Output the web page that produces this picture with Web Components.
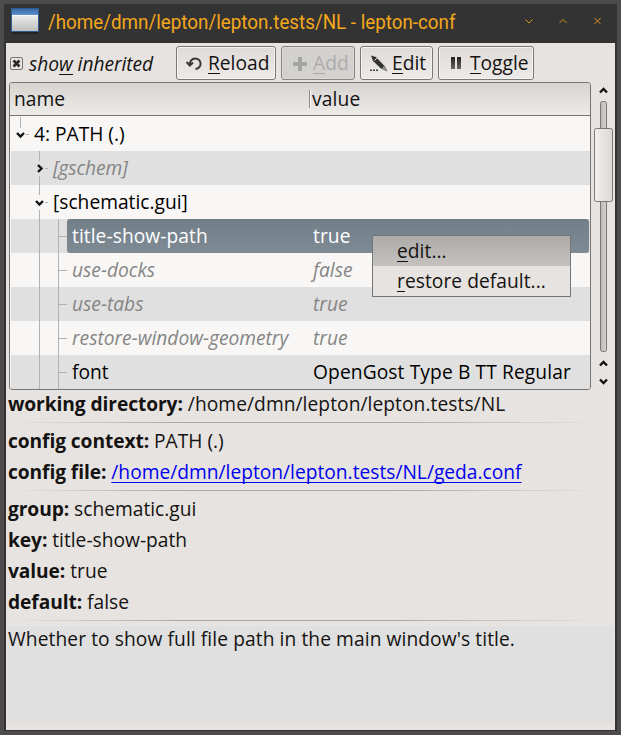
<!DOCTYPE html>
<html lang="en"><head><meta charset="utf-8"><title>lepton-conf</title>
<style>
html,body{margin:0;height:735px;overflow:hidden}
body{font:19.2px/31px "Open Sans","Noto Sans",sans-serif;color:#141312}
</style></head><body>
<conf-window></conf-window>
<script>
const define=(name,html,setup)=>customElements.define(name,class extends HTMLElement{
  connectedCallback(){
    if(this.shadowRoot)return;
    const t=document.createElement('template');
    t.innerHTML='<style>*{box-sizing:border-box}u{text-decoration:none;background:linear-gradient(currentColor,currentColor) 0 calc(100% - 2px)/100% 1px no-repeat}</style>'+html;
    this.attachShadow({mode:'open'}).append(t.content.cloneNode(true));
    if(setup)setup(this,this.shadowRoot);
  }
});

define('title-bar',`<style>
:host{display:flex;height:39px;background:#333;color:#f5a81c;align-items:center;padding:0 12px 0 7px;box-sizing:border-box}
.t{font:20px/38px Roboto,sans-serif;width:408px;margin-left:9px;white-space:nowrap;position:relative;top:-2px}
.t span{display:inline-block;transform-origin:0 50%}
.w{margin-left:auto;margin-top:-5px;margin-right:2px}
</style>
<svg width="28" height="27" viewBox="0 0 28 27" style="margin-top:-7px"><defs><linearGradient id="a" x2="0" y2="1"><stop stop-color="#3b6aa6"/><stop offset="1" stop-color="#5f92cf"/></linearGradient><linearGradient id="b" x2="0" y2="1"><stop stop-color="#eee"/><stop offset="1" stop-color="#bebebe"/></linearGradient></defs><path d="M1 26h26" stroke="#222" stroke-width="2"/><path d="M0 1h28v24H0z" fill="#2f5b93"/><path d="M1 2h26v6H1z" fill="url(#a)"/><path d="M1 8h26v16H1z" fill="url(#b)"/><path d="M1 8.500h26" stroke="#f8f8f8"/></svg>
<div class="t"><span><slot></slot></span></div>
<svg class="w" width="80" height="14" viewBox="0 0 80 14" fill="none" stroke="#dc9320"><path d="M2.500 5.500l3.500 3.500 3.500-3.500M36.500 9l3.500-3.500 3.500 3.500M71.500 4l6 6m0-6l-6 6"/></svg>`,
(el,r)=>{const s=r.querySelector('.t span');const w=s.getBoundingClientRect().width;if(w)s.style.transform='scaleX('+407.5/w+')'});

const icons={
reload:'<path d="M4 10a5.300 5.300 0 1 1 5.500 5" fill="none" stroke="#3a3a3a" stroke-width="2"/><path d="M.5 8l3.300 3.500L7 8.500" fill="none" stroke="#3a3a3a" stroke-width="2"/>',
add:'<path d="M7 3h4v5h5v4h-5v5H7v-5H2V8h5z" fill="#a3a3a1"/>',
edit:'<path d="M1 1.500l5 1.500 8.500 9-3 3L3 7z" fill="#333"/><path d="M14.500 12l2.500 5-5.500-2.500z" fill="#999" stroke="#555" stroke-width=".6"/><path d="M4.500 6.500l3-3" stroke="#ddd"/><path d="M0 16.300h2m1 0h2m1 0h2" stroke="#444" stroke-width="1.500"/>',
toggle:'<defs><linearGradient id="g" x2="0" y2="1"><stop stop-color="#222"/><stop offset="1" stop-color="#666"/></linearGradient></defs><path d="M3 3h4v12H3zM9 3h4v12H9z" fill="url(#g)"/>'};
define('tool-button',`<style>
:host{display:flex;box-sizing:border-box;height:34px;border:1px solid #7b7975;border-radius:3px;background:linear-gradient(#dedbd7,#edebe9);box-shadow:inset 0 0 0 1px #f5f3f1;align-items:center;white-space:nowrap;padding-left:9px}
:host([disabled]){color:#adaba9;background:#d3d1d0;border-color:#878582;box-shadow:inset 0 0 0 1px #dddbd9}
svg{flex:none;margin-right:4px}div{margin-top:-1px}
</style><svg width="18" height="18" viewBox="0 0 18 18"></svg><div><slot></slot></div>`,
(el,r)=>{r.querySelector('svg').innerHTML=icons[el.getAttribute('icon')]});

define('check-option',`<style>:host{display:flex;align-items:center;font-style:italic;width:166px;letter-spacing:-.05px}
svg{margin-right:6px;margin-top:1px}</style>
<svg width="13" height="13" viewBox="0 0 13 13"><rect x=".5" y=".5" width="12" height="12" rx="1.500" fill="#e8e5e2" stroke="#77736f"/><path d="M3.500 3.500l6 6m0-6l-6 6" stroke="#282828" stroke-width="2.600"/></svg><slot></slot>`);

define('tree-row',`<style>
:host{display:flex;height:34px;background:#f8f7f5;line-height:34px;color:#000;white-space:nowrap}
:host(:nth-of-type(even)){background:#e0e0e0}
:host([inherited]){font-style:italic;color:#858585}
svg{flex:none}.c{flex:1;display:flex;border-radius:3px;padding-left:5px;margin-right:1px}
:host([selected]) .c{background:linear-gradient(#717f88,#7f8b94);color:#fff}
.n{width:var(--n)}
</style><svg height="34"></svg><div class="c"><div class="n"><slot></slot></div><div><slot name="value"></slot></div></div>`,
(el,r)=>{const d=+el.getAttribute('depth'),s=r.querySelector('svg'),o=el.getAttribute('open');
 const w=[18,37,56][d];s.setAttribute('width',w);r.querySelector('.n').style.setProperty('--n',(297-w)+'px');
 const down='<path d="M-3.500-1.500L0 2 3.500-1.500" fill="none" stroke="#111" stroke-width="2.400"/>';
 const right='<path d="M-1.500-3.500L2 0-1.500 3.500" fill="none" stroke="#111" stroke-width="2.400"/>';
 let h='';
 if(d==0)h='<path d="M9.500 0v11M15 17.500h3" stroke="#b2b2b2"/><g transform="translate(9.500 17.500)">'+down+'</g>';
 if(d==1)h='<path d="M28.500 0v10M28.500 25v9M34 17.500h3" stroke="#b2b2b2"/><g transform="translate(28.500 17.500)">'+(o?down:right)+'</g>';
 if(d==2)h='<path d="M28.500 0v34M47.500 0v34M47.500 17.500h8.500" stroke="#b2b2b2"/>';
 s.innerHTML=h});

define('config-tree',`<style>
:host{display:block;box-sizing:border-box;width:582px;height:308px;border:1px solid #777572;border-radius:3px;overflow:hidden;background:#f8f7f5;padding:0 0 0 1px;}
header{display:flex;height:33px;margin-left:-1px;border-bottom:1px solid #777572;background:linear-gradient(#d7d4d0,#edebe8);line-height:32px;padding-left:4px;margin-bottom:1px}
header div:first-child{width:295px}
header div+div{border-left:1px solid #888;box-shadow:inset 1px 0 #fafafa;padding-left:2px;height:18px;margin-top:7px;line-height:18px;letter-spacing:.15px}
</style><header><div>name</div><div>value</div></header><slot></slot>`);

define('scroll-bar',`<style>:host{display:block;width:19px;height:308px}</style>
<svg width="19" height="308" viewBox="0 0 19 308"><defs><linearGradient id="t"><stop stop-color="#bdbbb8"/><stop offset="1" stop-color="#d4d2cf"/></linearGradient><linearGradient id="h"><stop stop-color="#f2f1ef"/><stop offset="1" stop-color="#dad7d4"/></linearGradient></defs>
<g fill="none" stroke="#111" stroke-width="2.400"><path d="M6 10.500L9.500 7 13 10.500M6 283.500L9.500 280l3.500 3.500M6 297.500l3.500 3.500 3.500-3.500"/></g>
<rect x="6.500" y="19.500" width="6" height="250" rx="2" fill="url(#t)" stroke="#7b7975"/><rect x=".5" y="46.500" width="18" height="73" rx="2" fill="url(#h)" stroke="#7b7975"/></svg>`);

define('info-line',`<style>:host{display:block;height:31px;line-height:31px;white-space:nowrap}b{font-weight:700;letter-spacing:-.09px}</style><b></b> <slot></slot>`,
(el,r)=>{r.querySelector('b').textContent=el.getAttribute('label')});
define('soft-rule',`<style>:host{display:block;height:1px;margin:3px 10px 2px 6px;background:linear-gradient(90deg,transparent,#aaa7a4 28%,#aaa7a4 65%,transparent)}</style>`);
define('description-box',`<style>:host{display:block;height:98px;width:605px;background:#e0e0e0;line-height:26px;margin-top:5px;letter-spacing:.085px}</style><slot></slot>`);

define('popup-menu',`<style>:host{position:absolute;left:372px;top:235px;width:199px;height:62px;border:1px solid #73777a;box-sizing:border-box;background:#e7e3e0;display:flex;flex-direction:column}
::slotted(*){height:30px}</style><slot></slot>`);
define('menu-item',`<style>:host{display:block;padding-left:24px;line-height:30px;white-space:nowrap;letter-spacing:.05px}:host([active]){background:linear-gradient(#adacaa,#c4c1be)}</style><slot></slot>`);

define('conf-window',`<style>
:host{display:block;width:621px;height:735px;background:#4d4b4c;padding:4px 4px 4px;box-sizing:border-box;position:relative}
.f{background:#333;height:727px;width:613px}
main{background:#e7e3e0;width:609px;height:687px;margin-left:2px;padding:3px 2px 0}
.bar{display:flex;height:34px;padding-left:2px}.bar tool-button{margin-right:5px}
.list{display:flex;gap:3px;margin:2px 0 0 1px;height:306px}
a{color:#0000ee;text-underline-offset:3px;text-decoration-thickness:1px;text-decoration-skip-ink:none}
.i{display:flow-root}
</style><div class="f"><title-bar>/home/dmn/lepton/lepton.tests/NL - lepton-conf</title-bar>
<main><div class="bar"><check-option><span>sho<u>w</u> inherited</span></check-option>
<tool-button icon="reload" style="width:100px"><u>R</u>eload</tool-button>
<tool-button icon="add" disabled style="width:74px"><u>A</u>dd</tool-button>
<tool-button icon="edit" style="width:73px"><u>E</u>dit</tool-button>
<tool-button icon="toggle" style="width:96px"><u>T</u>oggle</tool-button></div>
<div class="list"><config-tree>
<tree-row depth="0" open="1">4: PATH (.)</tree-row>
<tree-row depth="1" inherited style="letter-spacing:-.1px">[gschem]</tree-row>
<tree-row depth="1" open="1">[schematic.gui]</tree-row>
<tree-row depth="2" selected style="letter-spacing:.06px">title-show-path<span slot="value">true</span></tree-row>
<tree-row depth="2" inherited>use-docks<span slot="value">false</span></tree-row>
<tree-row depth="2" inherited>use-tabs<span slot="value">true</span></tree-row>
<tree-row depth="2" inherited>restore-window-geometry<span slot="value">true</span></tree-row>
<tree-row depth="2">font<span slot="value" style="letter-spacing:.11px">OpenGost Type B TT Regular</span></tree-row>
</config-tree><scroll-bar></scroll-bar></div>
<div class="i"><info-line label="working directory:"><span style="letter-spacing:.06px">/home/dmn/lepton/lepton.tests/NL</span></info-line><soft-rule></soft-rule>
<info-line label="config context:">PATH (.)</info-line>
<info-line label="config file:"><a href="#">/home/dmn/lepton/lepton.tests/NL/geda.conf</a></info-line><soft-rule></soft-rule>
<info-line label="group:">schematic.gui</info-line>
<info-line label="key:">title-show-path</info-line>
<info-line label="value:">true</info-line>
<info-line label="default:">false</info-line><soft-rule></soft-rule>
<description-box>Whether to show full file path in the main window's title.</description-box></div></main></div>
<popup-menu><menu-item active><u>e</u>dit...</menu-item><menu-item><u>r</u>estore default...</menu-item></popup-menu>`);
</script></body></html>
